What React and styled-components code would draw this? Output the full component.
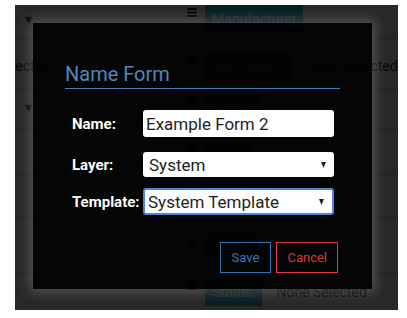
import React from "react";
import styled, { createGlobalStyle } from "styled-components";

const GlobalStyle = createGlobalStyle`
  html, body {
    margin: 0;
    padding: 0;
    background: #fff;
  }
  body {
    font-family: Roboto, "Liberation Sans", Arial, sans-serif;
  }
`;

const Screen = styled.div`
  padding: 5px 9px 8px 15px;
`;

// the list page behind the dialog
const Page = styled.div`
  position: relative;
  width: 383px;
  height: 305px;
  overflow: hidden;
  background: #f4f4f4;
`;

const Row = styled.div`
  display: flex;
  align-items: flex-start;
  box-sizing: border-box;
  height: ${(p) => p.$h}px;
  padding-top: ${(p) => p.$pt}px;
  border-bottom: ${(p) => (p.$last ? "none" : "3px double #d2d2d2")};
`;

const LeftCell = styled.div`
  width: 40px;
  height: 28px;
  flex: none;
  display: flex;
  align-items: center;
  justify-content: ${(p) => (p.$text ? "flex-end" : "flex-start")};
  padding: ${(p) => (p.$text ? "0 5px 0 0" : "0 0 0 10px")};
  box-sizing: border-box;
  overflow: hidden;
  white-space: nowrap;
  font-size: 14px;
  color: #333;
`;

const Handle = styled.div`
  margin: 3px 8px 0 132px;
  width: 10px;
  flex: none;
  line-height: 0;
`;

const Tag = styled.div`
  height: 28px;
  padding: 0 7px;
  display: flex;
  align-items: center;
  background: #3cb8d0;
  color: #fff;
  font-size: 14px;
  white-space: nowrap;
`;

const Value = styled.div`
  height: 28px;
  margin-left: 14px;
  display: flex;
  align-items: center;
  font-size: 14px;
  color: #333;
  white-space: nowrap;
`;

const Overlay = styled.div`
  position: absolute;
  inset: 0;
  background: rgba(0, 0, 0, 0.84);
  padding: 18px 0 0 18px;
`;

const Modal = styled.div`
  width: 339px;
  box-sizing: border-box;
  padding: 39px 32px 16px;
  background: rgba(0, 0, 0, 0.88);
  box-shadow: 0 0 12px 3px rgba(255, 255, 255, 0.22);
`;

const Title = styled.h2`
  margin: 0;
  padding-bottom: 2px;
  font: 400 20px/24px Roboto, "Liberation Sans", sans-serif;
  color: #4d89bf;
  border-bottom: 1px solid #3f80bd;
`;

const FormRow = styled.div`
  display: flex;
  align-items: center;
  margin: ${(p) => p.$mt}px 0 0 7px;
`;

const Label = styled.label`
  width: 71px;
  flex: none;
  font: 700 15px Roboto, "Liberation Sans", sans-serif;
  color: #fff;
`;

const TextInput = styled.input`
  width: 191px;
  height: 27px;
  box-sizing: border-box;
  border: none;
  border-radius: 3px;
  padding: 0 3px;
  background: #fff;
  font: 400 17px Roboto, "Liberation Sans", sans-serif;
  color: #1e1e1e;
  outline: none;
`;

const Select = styled.div`
  width: 191px;
  height: ${(p) => (p.$focus ? 27 : 25)}px;
  box-sizing: border-box;
  display: flex;
  align-items: center;
  justify-content: space-between;
  padding: 0 8px 0 ${(p) => (p.$focus ? 3 : 6)}px;
  background: #fff;
  border-radius: 3px;
  border: ${(p) => (p.$focus ? "2px solid #4a86d9" : "none")};
  font: 400 17px Roboto, "Liberation Sans", sans-serif;
  color: #1e1e1e;
`;

const Footer = styled.div`
  display: flex;
  justify-content: flex-end;
  gap: 5px;
  margin: 27px 2px 0 0;
`;

const Button = styled.button`
  height: 31px;
  padding: 0 ${(p) => p.$pad}px;
  background: transparent;
  border: 1px solid ${(p) => p.$line};
  border-radius: 0;
  color: ${(p) => p.$ink};
  font: 400 13px Roboto, "Liberation Sans", sans-serif;
  cursor: pointer;
`;

function Bars() {
  return (
    <svg width="10" height="9" viewBox="0 0 10 9">
      <rect x="0" y="0" width="10" height="2" fill="#222" />
      <rect x="0" y="3.5" width="10" height="2" fill="#222" />
      <rect x="0" y="7" width="10" height="2" fill="#222" />
    </svg>
  );
}

function Caret() {
  return (
    <svg width="5" height="6" viewBox="0 0 5 6">
      <polygon points="0,0 5,0 2.5,6" fill="#222" />
    </svg>
  );
}

const rows = [
  { h: 34, pt: 0, left: "caret", tag: "Manufacturer", value: "" },
  { h: 52, pt: 13, left: "None Selected", tag: "Description:", value: "None Selected" },
  { h: 40, pt: 2, left: "caret", tag: "Model:", value: "" },
  { h: 44, pt: 8, left: "", tag: "Type:", value: "" },
  { h: 44, pt: 8, left: "", tag: "Location:", value: "" },
  { h: 56, pt: 14, left: "", tag: "Owner:", value: "" },
  { h: 35, pt: 3, left: "", tag: "Status:", value: "None Selected", last: true },
];

export default function App() {
  return (
    <>
      <GlobalStyle />
      <Screen>
        <Page>
          {rows.map((r, i) => (
            <Row key={i} $h={r.h} $pt={r.pt} $last={r.last}>
              <LeftCell $text={r.left && r.left !== "caret"}>
                {r.left === "caret" ? "▾" : r.left}
              </LeftCell>
              <Handle>
                <Bars />
              </Handle>
              <Tag>{r.tag}</Tag>
              {r.value && <Value>{r.value}</Value>}
            </Row>
          ))}
          <Overlay>
            <Modal>
              <Title>Name Form</Title>
              <FormRow $mt={21}>
                <Label>Name:</Label>
                <TextInput defaultValue="Example Form 2" />
              </FormRow>
              <FormRow $mt={15}>
                <Label>Layer:</Label>
                <Select>
                  <span>System</span>
                  <Caret />
                </Select>
              </FormRow>
              <FormRow $mt={11}>
                <Label>Template:</Label>
                <Select $focus>
                  <span>System Template</span>
                  <Caret />
                </Select>
              </FormRow>
              <Footer>
                <Button $pad={11} $line="#2f74b5" $ink="#3a78b6">
                  Save
                </Button>
                <Button $pad={10} $line="#e03c3c" $ink="#d83a3a">
                  Cancel
                </Button>
              </Footer>
            </Modal>
          </Overlay>
        </Page>
      </Screen>
    </>
  );
}
